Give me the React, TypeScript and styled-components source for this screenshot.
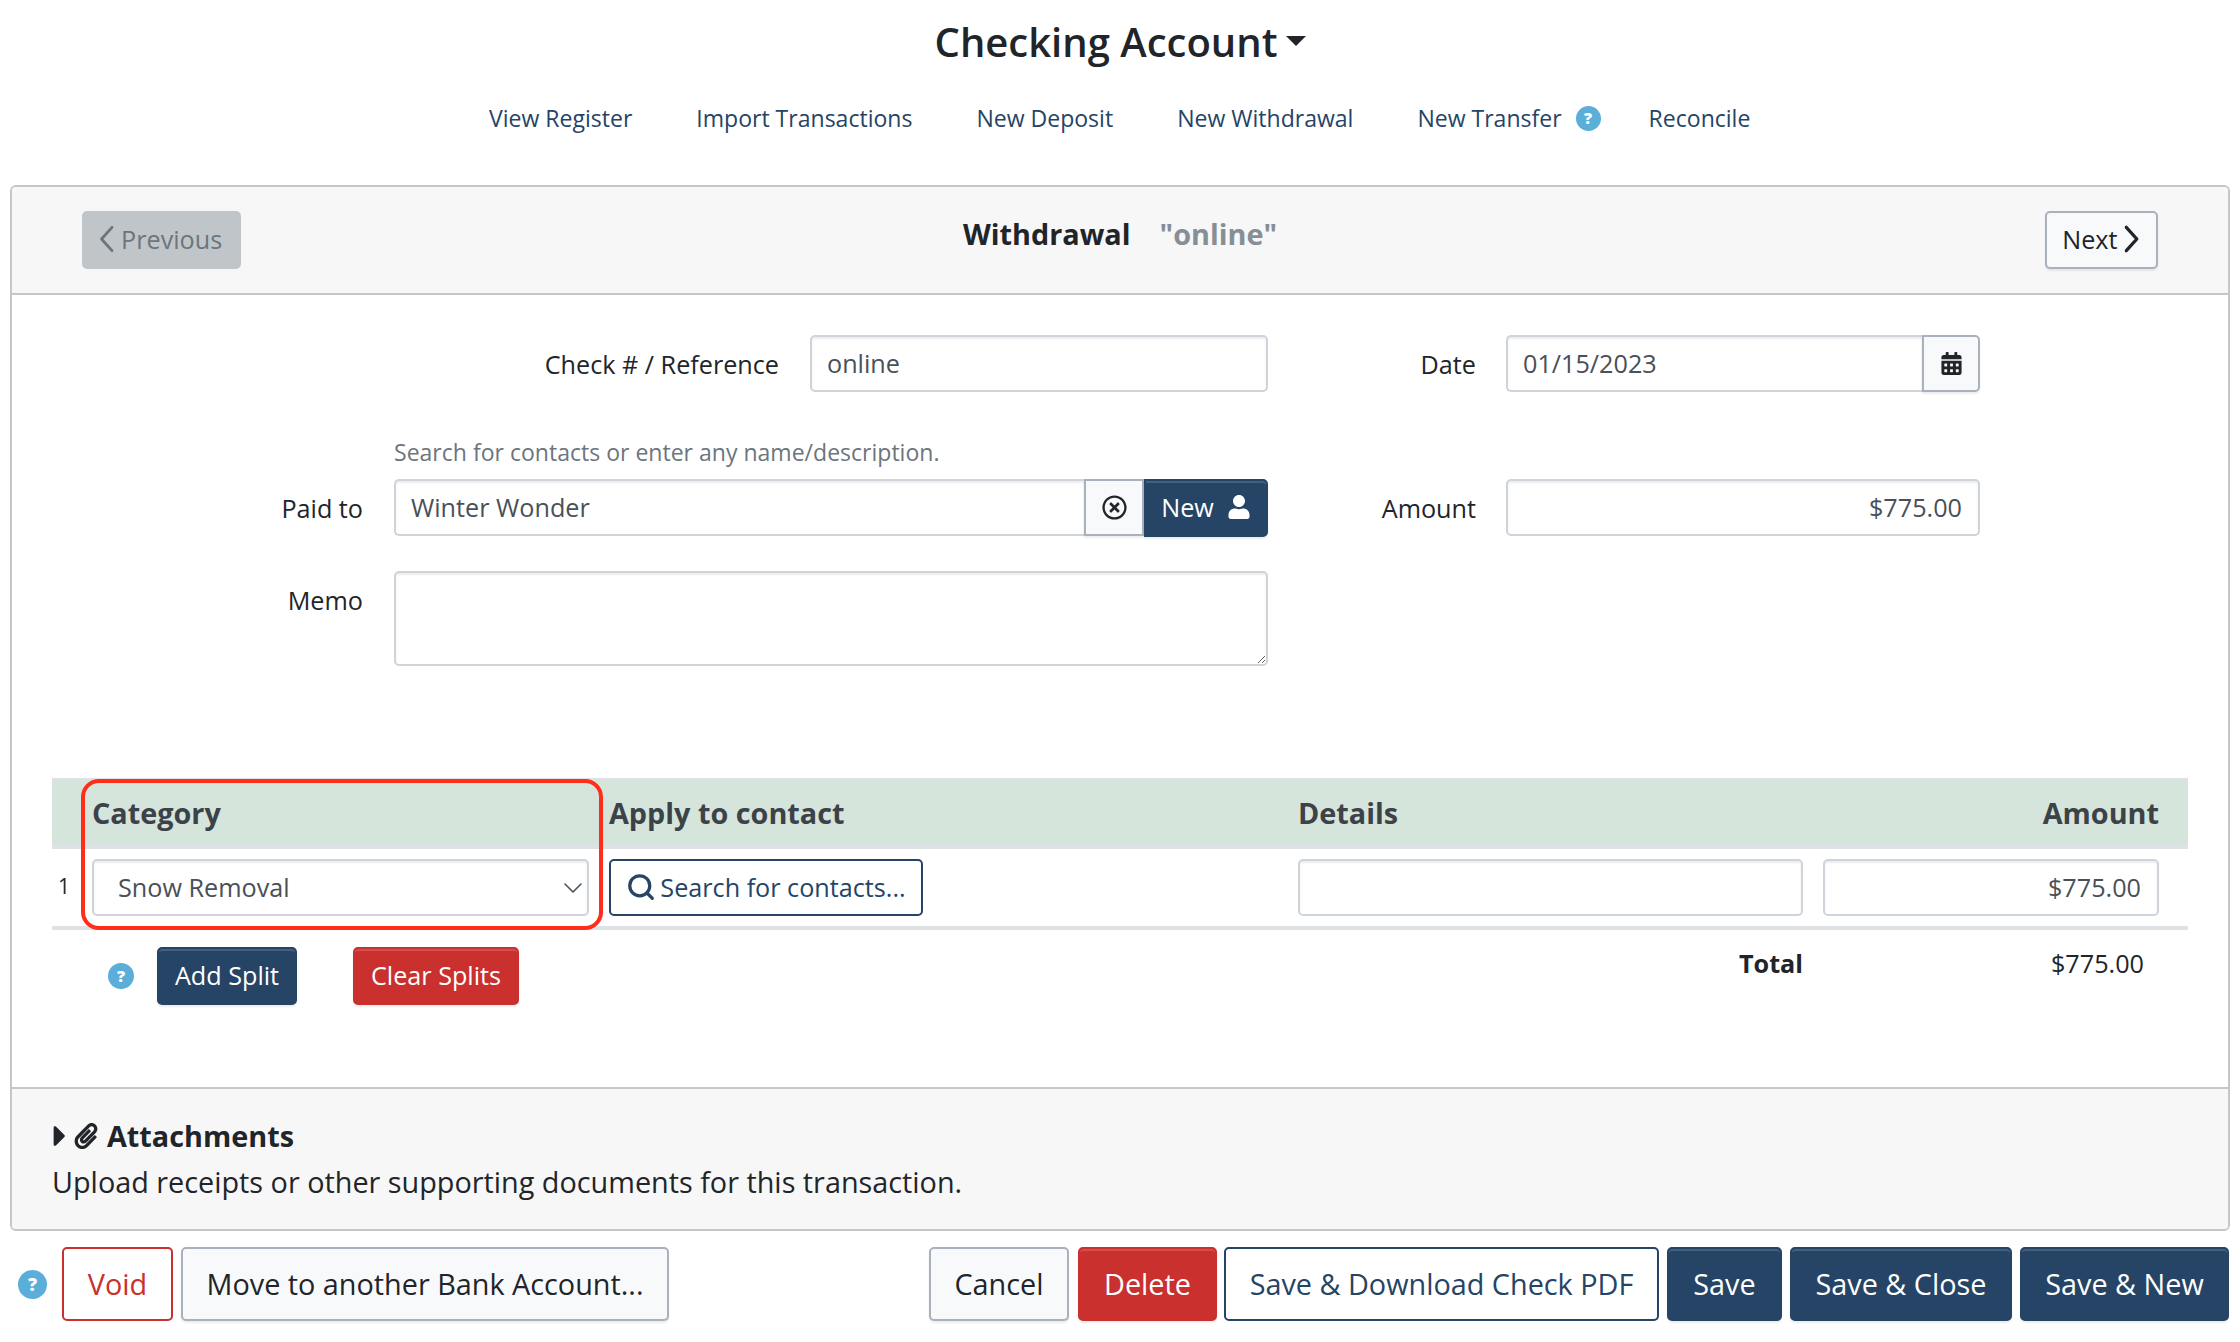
import React from "react";
import styled, { createGlobalStyle, css } from "styled-components";
import { FaCalendarAlt, FaUser, FaRegTimesCircle, FaPaperclip, FaCaretRight } from "react-icons/fa";
import { ChevronDown, Search } from "lucide-react";

const Global = createGlobalStyle`
  html, body { margin: 0; padding: 0; background: #fff; }
  body { font-family: "Open Sans", "Liberation Sans", sans-serif; color: #212529; font-size: 25.2px; }
  * { box-sizing: border-box; }
`;

const navy = "#264465";
const red = "#c9302e";

const Page = styled.div`
  width: 2240px;
  height: 1342px;
  padding: 0 10px;
  overflow: hidden;
`;

const Title = styled.h1`
  margin: 0;
  height: 83px;
  padding-left: 1px;
  display: flex;
  align-items: center;
  justify-content: center;
  font-size: 40px;
  font-weight: 600;
  line-height: 1;
  gap: 9px;
  color: #212529;
`;

const Caret = styled.span`
  width: 0;
  height: 0;
  margin-top: -1px;
  border-left: 10px solid transparent;
  border-right: 10px solid transparent;
  border-top: 10px solid #212529;
`;

const Nav = styled.nav`
  height: 102px;
  padding: 19px 0 0 479px;
  display: flex;
  gap: 64px;
  align-items: flex-start;
`;

const NavLink = styled.a`
  color: ${navy};
  font-size: 23.04px;
  line-height: 33px;
  display: inline-flex;
  align-items: center;
  gap: 14px;
`;

const Help = styled.span<{ $size: number }>`
  width: ${(p) => p.$size}px;
  height: ${(p) => p.$size}px;
  flex: none;
  border-radius: 50%;
  background: #5aaed9;
  color: #fff;
  font-size: ${(p) => Math.round(p.$size * 0.62)}px;
  font-weight: 800;
  line-height: ${(p) => p.$size}px;
  text-align: center;
`;

const NavHelp = styled(Help)`
  margin-right: -16px;
`;

const Panel = styled.section`
  border: 2px solid #c6c6c6;
  border-radius: 6px;
  height: 1046px;
  display: flex;
  flex-direction: column;
  overflow: hidden;
`;

const PanelHead = styled.header`
  height: 108px;
  flex: none;
  background: #f7f7f7;
  border-bottom: 2px solid #c6c6c6;
  display: grid;
  grid-template-columns: 1fr auto 1fr;
  align-items: start;
  padding: 24px 70px 0 70px;
`;

const HeadTitle = styled.div`
  font-size: 28.8px;
  font-weight: 700;
  line-height: 38px;
  margin-top: 4px;
  display: flex;
  gap: 29px;
`;

const Muted = styled.span`
  color: #868e96;
`;

const HeadEnd = styled.div`
  text-align: right;
`;

const btnBase = css`
  font-family: inherit;
  border-radius: 5px;
  display: inline-flex;
  align-items: center;
  justify-content: center;
  white-space: nowrap;
  border-style: solid;
  border-width: 2px;
  padding: 0 0 2px;
`;

type Tone = "light" | "navy" | "red" | "outlineNavy" | "outlineRed" | "disabled";

const tones: Record<Tone, ReturnType<typeof css>> = {
  light: css`
    background: #f8f9fa;
    border-color: #a9b2bc;
    color: #212529;
    box-shadow: 0 2px 2px rgba(0, 0, 0, 0.075);
  `,
  navy: css`
    background: ${navy};
    border-color: ${navy};
    color: #fff;
    box-shadow: inset 0 2px 0 rgba(255, 255, 255, 0.15), 0 2px 2px rgba(0, 0, 0, 0.075);
  `,
  red: css`
    background: ${red};
    border-color: ${red};
    color: #fff;
    box-shadow: inset 0 2px 0 rgba(255, 255, 255, 0.15), 0 2px 2px rgba(0, 0, 0, 0.075);
  `,
  outlineNavy: css`
    background: #fff;
    border-color: ${navy};
    color: ${navy};
  `,
  outlineRed: css`
    background: #fff;
    border-color: ${red};
    color: ${red};
  `,
  disabled: css`
    background: #c0c5c9;
    border-color: #c0c5c9;
    color: #6c757d;
  `,
};

const SmallBtn = styled.button<{ $tone: Tone; $w: number }>`
  ${btnBase}
  ${(p) => tones[p.$tone]}
  width: ${(p) => p.$w}px;
  height: 58px;
  font-size: 25.2px;
  gap: 7px;
`;

const PrevBtn = styled(SmallBtn)`
  padding-right: 3px;
`;

const LargeBtn = styled.button<{ $tone: Tone; $w: number }>`
  ${btnBase}
  ${(p) => tones[p.$tone]}
  width: ${(p) => p.$w}px;
  height: 74px;
  font-size: 28.8px;
`;

const DeleteBtn = styled(LargeBtn)`
  margin: 0 -1px 0 1px;
`;

const FormBody = styled.div`
  flex: none;
  padding: 40px 0 112px 0;
  display: grid;
  grid-template-columns: 351px 31px 385px 31px 458px 208px 30px 474px;
  grid-template-rows: 57px 87px 57px 35px 95px;
`;

const Label = styled.label<{ $col: string; $row: number; $top?: number }>`
  grid-column: ${(p) => p.$col};
  grid-row: ${(p) => p.$row};
  text-align: right;
  line-height: 33px;
  padding-top: ${(p) => p.$top ?? 13}px;
  font-size: 25.2px;
`;

const Hint = styled.div`
  grid-column: 3 / 6;
  grid-row: 2;
  align-self: end;
  padding-bottom: 12px;
  color: #6c757d;
  font-size: 23.04px;
  line-height: 30px;
`;

const fieldBase = css`
  font-family: inherit;
  font-size: 25.2px;
  color: #495057;
  background: #fff;
  border: 2px solid #ced4da;
  border-radius: 5px;
  box-shadow: inset 0 2px 2px rgba(0, 0, 0, 0.075);
  outline: none;
  padding: 0 16px 2px 15px;
  height: 57px;
  min-width: 0;
`;

const Field = styled.input<{ $right?: boolean }>`
  ${fieldBase}
  width: 100%;
  text-align: ${(p) => (p.$right ? "right" : "left")};
`;

const Slot = styled.div<{ $col: string; $row: number }>`
  grid-column: ${(p) => p.$col};
  grid-row: ${(p) => p.$row};
  display: flex;
`;

const GroupField = styled(Field)`
  flex: 1;
  border-radius: 5px 0 0 5px;
  border-right: 0;
`;

const Addon = styled.button<{ $w: number }>`
  ${btnBase}
  ${tones.light}
  width: ${(p) => p.$w}px;
  height: 57px;
  flex: none;
  padding: 0;
  border-radius: 0 5px 5px 0;
  color: #212529;
`;

const ClearAddon = styled(Addon)`
  border-radius: 0;
`;

const NewBtn = styled.button`
  ${btnBase}
  ${tones.navy}
  width: 124px;
  height: 58px;
  flex: none;
  gap: 13px;
  font-size: 25.2px;
  border-radius: 0 5px 5px 0;
`;

const Memo = styled.textarea`
  ${fieldBase}
  width: 100%;
  height: 95px;
  resize: both;
  display: block;
`;

const Table = styled.div`
  margin: 0 40px;
  position: relative;
`;

const columns = css`
  display: grid;
  grid-template-columns: 20px 497px 669px 505px 336px;
  column-gap: 20px;
  padding-right: 29px;
`;

const HeadRow = styled.div`
  ${columns}
  height: 71px;
  background: #d5e5dc;
  border-top: 2px solid #dee2e6;
  border-bottom: 4px solid #dee2e6;
  align-items: center;
  color: #3c4248;
  font-size: 28.8px;
  font-weight: 700;
`;

const HeadCell = styled.div<{ $col: number; $right?: boolean }>`
  grid-column: ${(p) => p.$col};
  text-align: ${(p) => (p.$right ? "right" : "left")};
  line-height: 38px;
`;

const BodyRow = styled.div`
  ${columns}
  height: 81px;
  border-bottom: 4px solid #dee2e6;
  padding-top: 10px;
  align-items: start;
`;

const RowNum = styled.div`
  font-size: 21px;
  line-height: 54px;
  color: #212529;
  text-align: right;
  padding-right: 2px;
`;

const SelectBox = styled.div`
  ${fieldBase}
  display: flex;
  align-items: center;
  justify-content: space-between;
  padding: 0 0 2px 24px;
`;

const SelectChevron = styled(ChevronDown)`
  flex: none;
  margin: 2px -2px 0 0;
`;

const SearchBtn = styled.button`
  ${btnBase}
  ${tones.outlineNavy}
  width: 314px;
  height: 57px;
  font-size: 25.2px;
  gap: 4px;
`;

const Annotation = styled.div`
  position: absolute;
  left: 29px;
  top: 1px;
  width: 522px;
  height: 151px;
  border: 4px solid #ff2d1a;
  border-radius: 18px;
  pointer-events: none;
`;

const ActionsRow = styled.div`
  ${columns}
  padding-top: 17px;
  padding-bottom: 82px;
  align-items: start;
`;

const ActionLeft = styled.div`
  grid-column: 1 / 4;
  display: flex;
  align-items: center;
  padding-left: 56px;
`;

const AddSplit = styled(SmallBtn)`
  margin-left: 23px;
`;

const ClearSplits = styled(SmallBtn)`
  margin-left: 56px;
`;

const TotalLabel = styled.div`
  grid-column: 4;
  text-align: right;
  font-weight: 700;
  line-height: 33px;
`;

const TotalValue = styled.div`
  grid-column: 5;
  text-align: right;
  padding-right: 15px;
  line-height: 33px;
`;

const PanelFoot = styled.footer`
  flex: 1;
  background: #f7f7f7;
  border-top: 2px solid #c6c6c6;
  padding: 27px 40px 0;
`;

const AttachHead = styled.div`
  display: flex;
  align-items: center;
  font-size: 28.8px;
  font-weight: 700;
  line-height: 40px;
  margin-left: -9px;
`;

const AttachCaret = styled(FaCaretRight)`
  width: 34px;
  height: 34px;
  flex: none;
`;

const AttachClip = styled(FaPaperclip)`
  width: 26px;
  height: 26px;
  flex: none;
  margin: 0 8px 0 -4px;
`;

const AttachText = styled.div`
  font-size: 28.8px;
  line-height: 40px;
  margin-top: 6px;
`;

const ActionBar = styled.div`
  margin-top: 16px;
  display: flex;
  justify-content: space-between;
  margin-left: 8px;
  margin-right: 1px;
`;

const BarGroup = styled.div`
  display: flex;
  align-items: center;
  gap: 8px;
`;

const BarHelp = styled(Help)`
  margin-right: 7px;
`;

const ChevronMark = ({ dir, weight, tall }: { dir: "left" | "right"; weight: number; tall: number }) => (
  <svg width={(tall * 14) / 24} height={tall} viewBox="0 0 14 24" fill="none" stroke="currentColor" strokeWidth={weight} strokeLinecap="round" strokeLinejoin="round">
    <path d={dir === "left" ? "M12 2 L3 12 L12 22" : "M2 2 L11 12 L2 22"} />
  </svg>
);

export default function App() {
  return (
    <Page>
      <Global />
      <Title>
        Checking Account <Caret />
      </Title>
      <Nav>
        <NavLink>View Register</NavLink>
        <NavLink>Import Transactions</NavLink>
        <NavLink>New Deposit</NavLink>
        <NavLink>New Withdrawal</NavLink>
        <NavLink>
          New Transfer <NavHelp $size={25}>?</NavHelp>
        </NavLink>
        <NavLink>Reconcile</NavLink>
      </Nav>
      <Panel>
        <PanelHead>
          <div>
            <PrevBtn $tone="disabled" $w={159}>
              <ChevronMark dir="left" weight={2.4} tall={28} />
              Previous
            </PrevBtn>
          </div>
          <HeadTitle>
            <span>Withdrawal</span>
            <Muted>"online"</Muted>
          </HeadTitle>
          <HeadEnd>
            <SmallBtn $tone="light" $w={113}>
              Next
              <ChevronMark dir="right" weight={2.8} tall={28} />
            </SmallBtn>
          </HeadEnd>
        </PanelHead>
        <FormBody>
          <Label $col="1 / 4" $row={1}>Check # / Reference</Label>
          <Slot $col="5" $row={1}><Field defaultValue="online" /></Slot>
          <Label $col="6" $row={1}>Date</Label>
          <Slot $col="8" $row={1}>
            <GroupField defaultValue="01/15/2023" />
            <Addon $w={58}><FaCalendarAlt size={23} /></Addon>
          </Slot>
          <Hint>Search for contacts or enter any name/description.</Hint>
          <Label $col="1" $row={3}>Paid to</Label>
          <Slot $col="3 / 6" $row={3}>
            <GroupField defaultValue="Winter Wonder" />
            <ClearAddon $w={60}><FaRegTimesCircle size={25} /></ClearAddon>
            <NewBtn>New <FaUser size={24} /></NewBtn>
          </Slot>
          <Label $col="6" $row={3}>Amount</Label>
          <Slot $col="8" $row={3}><Field $right defaultValue="$775.00" /></Slot>
          <Label $col="1" $row={5} $top={13}>Memo</Label>
          <Slot $col="3 / 6" $row={5}><Memo /></Slot>
        </FormBody>
        <Table>
          <HeadRow>
            <HeadCell $col={2}>Category</HeadCell>
            <HeadCell $col={3}>Apply to contact</HeadCell>
            <HeadCell $col={4}>Details</HeadCell>
            <HeadCell $col={5} $right>Amount</HeadCell>
          </HeadRow>
          <BodyRow>
            <RowNum>1</RowNum>
            <SelectBox>
              Snow Removal
              <SelectChevron size={32} strokeWidth={1.2} />
            </SelectBox>
            <div>
              <SearchBtn>
                <Search size={30} strokeWidth={2.6} />
                Search for contacts...
              </SearchBtn>
            </div>
            <Field />
            <Field $right defaultValue="$775.00" />
          </BodyRow>
          <ActionsRow>
            <ActionLeft>
              <Help $size={26}>?</Help>
              <AddSplit $tone="navy" $w={140}>Add Split</AddSplit>
              <ClearSplits $tone="red" $w={166}>Clear Splits</ClearSplits>
            </ActionLeft>
            <TotalLabel>Total</TotalLabel>
            <TotalValue>$775.00</TotalValue>
          </ActionsRow>
          <Annotation />
        </Table>
        <PanelFoot>
          <AttachHead>
            <AttachCaret />
            <AttachClip />
            Attachments
          </AttachHead>
          <AttachText>Upload receipts or other supporting documents for this transaction.</AttachText>
        </PanelFoot>
      </Panel>
      <ActionBar>
        <BarGroup>
          <BarHelp $size={29}>?</BarHelp>
          <LargeBtn $tone="outlineRed" $w={111}>Void</LargeBtn>
          <LargeBtn $tone="light" $w={488}>Move to another Bank Account...</LargeBtn>
        </BarGroup>
        <BarGroup>
          <LargeBtn $tone="light" $w={140}>Cancel</LargeBtn>
          <DeleteBtn $tone="red" $w={139}>Delete</DeleteBtn>
          <LargeBtn $tone="outlineNavy" $w={435}>Save &amp; Download Check PDF</LargeBtn>
          <LargeBtn $tone="navy" $w={115}>Save</LargeBtn>
          <LargeBtn $tone="navy" $w={222}>Save &amp; Close</LargeBtn>
          <LargeBtn $tone="navy" $w={209}>Save &amp; New</LargeBtn>
        </BarGroup>
      </ActionBar>
    </Page>
  );
}
